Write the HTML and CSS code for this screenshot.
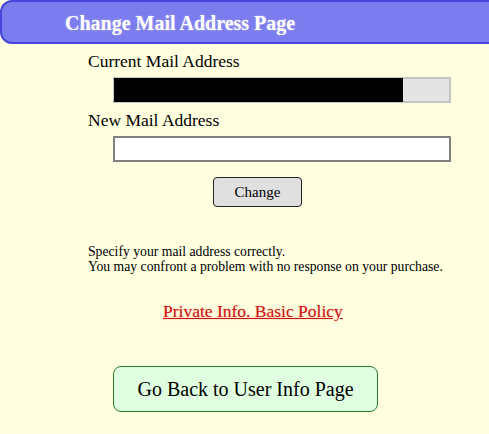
FILE: index.html
```html
<!DOCTYPE html>
<html lang="en">
<head>
    <meta charset="UTF-8">
    <title>Change Mail Address Page</title>
    <link rel="stylesheet" href="styles.css">
</head>
<body>
    <div class="header">Change Mail Address Page</div>

    <div class="content">
        <div class="label">Current Mail Address</div>
        <div class="field field-current">
            <span class="redacted"></span>
        </div>

        <div class="label">New Mail Address</div>
        <input class="field field-new" type="text">

        <div class="change-row">
            <button class="change-btn">Change</button>
        </div>

        <p class="note">
            Specify your mail address correctly.<br>
            You may confront a problem with no response on your purchase.
        </p>

        <div class="policy-row">
            <a class="policy-link" href="#">Private Info. Basic Policy</a>
        </div>
    </div>

    <div class="back-row">
        <button class="back-btn">Go Back to User Info Page</button>
    </div>
</body>
</html>
```

FILE: styles.css
```css
body {
    margin: 0;
    background-color: #ffffe0;
    font-family: "Liberation Serif", "Times New Roman", serif;
    color: #000;
    overflow: hidden;
}
.header {
    height: 40px;
    margin-right: -20px;
    padding-left: 63px;
    background-color: #7b7cee;
    border: 2px solid #4646dc;
    border-radius: 12px;
    color: #fff;
    font-size: 20px;
    font-weight: bold;
    line-height: 42px;
    text-shadow: 0 0 2px rgba(255,255,255,0.5);
}
.content {
    padding-left: 88px;
    width: 363px;
}
.label {
    font-size: 17.5px;
    line-height: 20px;
    margin-top: 7px;
}
.field {
    display: block;
    box-sizing: border-box;
    width: 338px;
    height: 26px;
    margin: 6px 0 0 25px;
}
.field-current {
    background-color: #e4e4e4;
    border: 2px solid #c4c4c4;
}
.redacted {
    display: block;
    width: 289px;
    height: 24px;
    margin: -1px 0 0 -1px;
    background-color: #000;
}
.field-new {
    background-color: #fff;
    border: 2px solid #808080;
    padding: 0;
}
.change-row {
    margin-top: 15px;
    padding-left: 125px;
}
.change-btn {
    width: 89px;
    height: 30px;
    background-color: #e0e0e0;
    border: 1px solid #222;
    border-radius: 4px;
    font-family: inherit;
    font-size: 15px;
    padding: 0;
}
.note {
    margin: 37px 0 0;
    font-size: 13.7px;
    line-height: 15px;
}
.policy-row {
    margin-top: 27px;
    padding-left: 75px;
}
.policy-link {
    color: #cc1111;
    font-size: 17.5px;
    text-shadow: 0 0 2px rgba(220,40,40,0.35);
}
.back-row {
    margin-top: 44px;
    padding-left: 113px;
}
.back-btn {
    width: 265px;
    height: 46px;
    background-color: #e0ffe0;
    border: 1px solid #2b7a2b;
    border-radius: 8px;
    font-family: inherit;
    font-size: 20px;
    padding: 0;
}
```
